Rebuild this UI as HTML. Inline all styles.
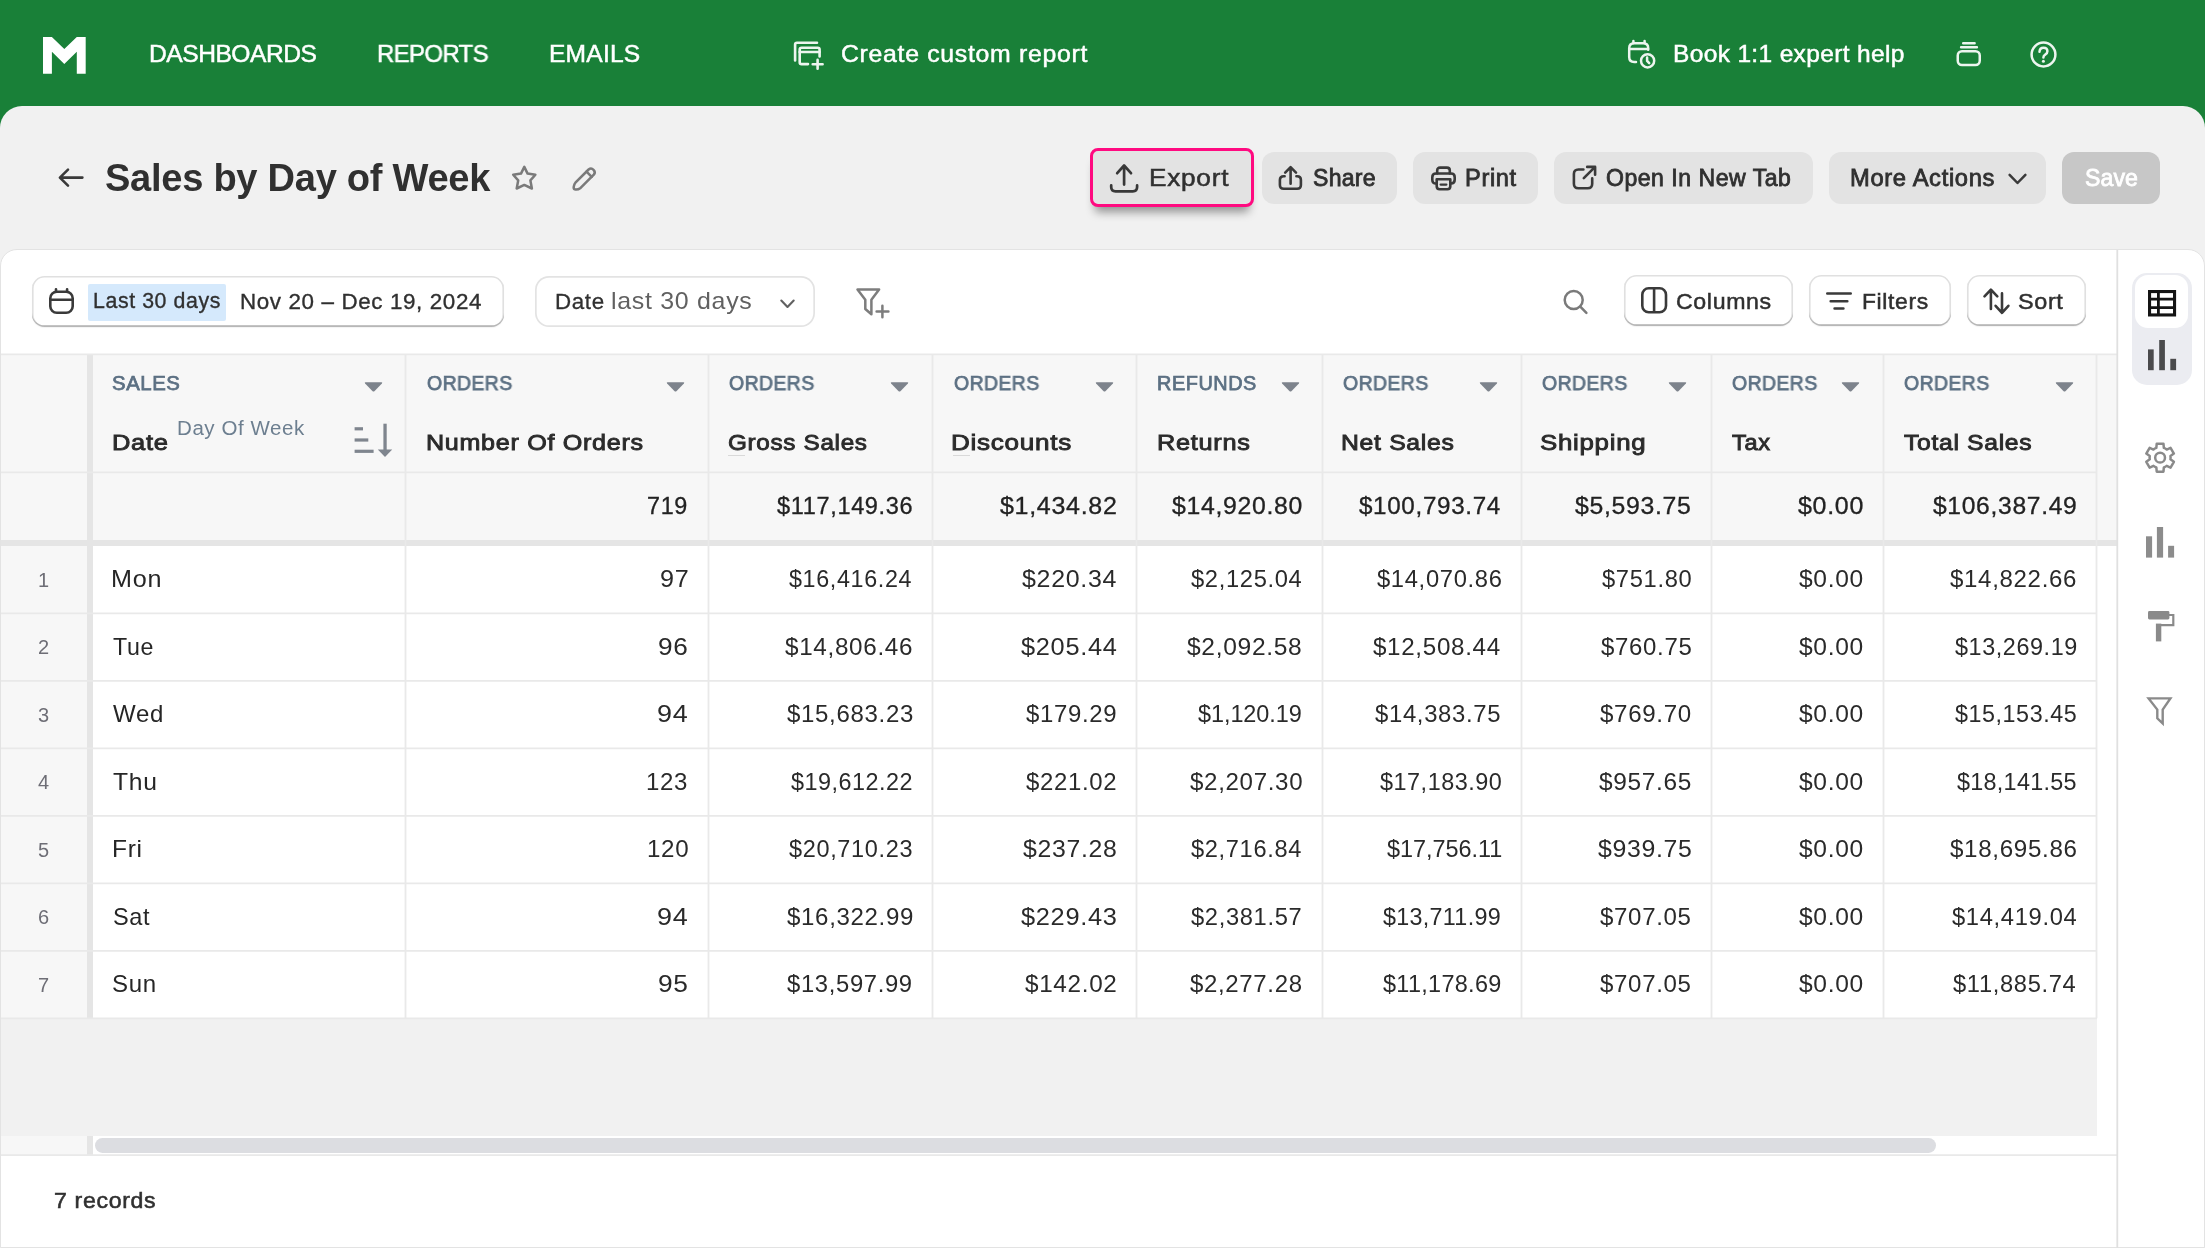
<!DOCTYPE html><html><head><meta charset="utf-8"><title>Sales by Day of Week</title><style>

*{box-sizing:border-box;margin:0;padding:0}
html,body{width:2205px;height:1248px;overflow:hidden}
body{background:#198038;font-family:"Liberation Sans",sans-serif;position:relative;color:#303030}
.abs{position:absolute}
.t{position:absolute;white-space:nowrap;line-height:1;transform-origin:left center;will-change:transform}
.panel{position:absolute;left:0;top:106px;width:2205px;height:1142px;background:#f1f1f1;border-radius:22px 22px 0 0}
.card{position:absolute;left:0;top:249px;width:2205px;height:999px;background:#fff;border:1.5px solid #e3e3e3;border-radius:17px 17px 0 0;overflow:hidden}
.btn{position:absolute;background:#e3e3e3;border-radius:12px}
.pill{position:absolute;background:#fff;border-radius:12.5px;box-shadow:inset 0 -1.7px 0 0 #b7b7b7,inset 0 0 0 1.6px #e0e0e0,0 1px 1px rgba(0,0,0,.05)}
svg{position:absolute;overflow:visible}

</style></head><body>
<div class="panel"></div>
<svg style="left:42.6px;top:36.5px" width="42.7" height="36.8" viewBox="0 0 42.7 36.8"><path d="M0 0 H8.9 L21.3 12.1 L33.8 0 H42.7 V36.8 H33.8 V14.8 L21.3 27 L8.9 14.8 V36.8 H0Z" fill="#fff"/></svg>
<svg style="left:793px;top:40.5px" width="31" height="29" viewBox="0 0 31 29" fill="none" stroke="#edf5ef" stroke-width="2.6" stroke-linecap="round" stroke-linejoin="round"><path d="M2.1 19.5 V3.6 Q2.1 1.7 4 1.7 H24"/><path d="M15 23.1 H8.6 Q6.7 23.1 6.7 21.2 V8.6 Q6.7 6.7 8.6 6.7 H24.7 Q26.6 6.7 26.6 8.6 V15.4"/><path d="M6.7 11 H26.6"/><path d="M24.6 18.9 V27.8 M19.7 23.3 H29.6"/></svg>
<svg style="left:1627px;top:40px" width="30" height="30" viewBox="0 0 30 30" fill="none" stroke="#edf5ef" stroke-width="2.5" stroke-linecap="round" stroke-linejoin="round"><path d="M9 22 H7.2 Q2.2 22 2.2 17 V8.2 Q2.2 3.2 7.2 3.2 H16.2 Q21.2 3.2 21.2 8.2 V9.8"/><path d="M2.4 8.9 H21"/><path d="M6.4 0.9 V3 M17.6 0.9 V3"/><circle cx="20.6" cy="20.8" r="6.6"/><path d="M20.1 17.6 V20.9 L22.2 23.2"/></svg>
<svg style="left:1956px;top:42px" width="26" height="25" viewBox="0 0 26 25" fill="none" stroke="#edf5ef" stroke-width="2.5" stroke-linecap="round" stroke-linejoin="round"><path d="M7.2 1.2 H18.6 M5.1 5.3 H20.9"/><rect x="1.75" y="9.25" width="22" height="13.8" rx="4.2"/></svg>
<svg style="left:2030.4px;top:40.7px" width="27" height="27" viewBox="0 0 27 27" fill="none" stroke="#edf5ef" stroke-width="2.5" stroke-linecap="round" stroke-linejoin="round"><circle cx="13.5" cy="13.5" r="11.9"/><path d="M9.5 10.8 Q9.7 6.7 13.5 6.7 Q17.4 6.7 17.4 10.2 Q17.4 12.4 15.2 13.6 Q13.4 14.6 13.4 16.6"/><circle cx="13.4" cy="20.3" r="1.5" fill="#edf5ef" stroke="none"/></svg>
<svg style="left:58px;top:167.8px" width="27" height="20" viewBox="0 0 27 20" fill="none" stroke="#3a3a3a" stroke-width="2.6" stroke-linecap="round" stroke-linejoin="round"><path d="M24.4 9.6 H2.2 M10 1.6 L1.9 9.6 L10 17.6"/></svg>
<svg style="left:511px;top:165px" width="27" height="26" viewBox="0 0 27 26" fill="none" stroke="#7a7a7a" stroke-width="2.5" stroke-linejoin="round" stroke-linecap="round"><path d="M13.3 1.9 L16.6 8.6 L24.4 9.7 L19.4 15.4 L20.9 23.5 L13.3 19.9 L5.7 23.5 L7.2 15.4 L2.2 9.7 L10 8.6Z"/></svg>
<svg style="left:571.5px;top:165.5px" width="26" height="26" viewBox="0 0 26 26" fill="none" stroke="#7a7a7a" stroke-width="2.5" stroke-linecap="round" stroke-linejoin="round"><path d="M16.6 3.5 A3.7 3.7 0 0 1 21.8 8.7 L8.6 21.9 Q5.5 24.2 2.8 23.4 Q1.3 22.8 1.8 20.4 Q2.3 18 3.4 16.7 Z"/><path d="M14.5 5.6 L19.7 10.8"/></svg>
<div class="abs" style="left:1090.2px;top:147.9px;width:163.9px;height:59.2px;border:3.8px solid #ff0a80;border-radius:8px;background:#e3e3e3;box-shadow:0 10px 10px -5px rgba(0,0,0,.40)"></div>
<div class="btn" style="left:1261.6px;top:152px;width:135.7px;height:51.7px"></div>
<div class="btn" style="left:1413px;top:152px;width:125.4px;height:51.7px"></div>
<div class="btn" style="left:1554.2px;top:152px;width:258.7px;height:51.7px"></div>
<div class="btn" style="left:1828.9px;top:152px;width:217.2px;height:51.7px"></div>
<div class="btn" style="left:2062.3px;top:152px;width:97.5px;height:51.7px;background:#c7c7c7"></div>
<svg style="left:1110px;top:163.5px" width="29" height="29" viewBox="0 0 29 29" fill="none" stroke="#383838" stroke-width="2.7" stroke-linecap="round" stroke-linejoin="round"><path d="M14.1 20.6 V1.6 M7.2 9.2 L14.1 1.5 L21 9.2"/><path d="M1.2 21.4 V23 Q1.2 27.3 5.5 27.3 H22.8 Q27.1 27.3 27.1 23 V21.4"/></svg>
<svg style="left:1278px;top:165.5px" width="25" height="25" viewBox="0 0 25 25" fill="none" stroke="#3a3a3a" stroke-width="2.6" stroke-linecap="round" stroke-linejoin="round"><path d="M12.6 17.8 V1.8 M7.2 6.6 L12.6 1.2 L18 6.6"/><path d="M6.6 10.2 H5.7 Q1.9 10.2 1.9 14 V19 Q1.9 22.8 5.7 22.8 H19.1 Q22.9 22.8 22.9 19 V14 Q22.9 10.2 19.1 10.2 H18.4"/></svg>
<svg style="left:1431px;top:165.5px" width="25" height="25" viewBox="0 0 25 25" fill="none" stroke="#3a3a3a" stroke-width="2.6" stroke-linecap="round" stroke-linejoin="round"><path d="M6.2 7.5 V4.5 Q6.2 1.6 9.1 1.6 H15.9 Q18.8 1.6 18.8 4.5 V7.5"/><path d="M5.7 17.5 H5 Q1.3 17.5 1.3 13.8 V11.2 Q1.3 7.5 5 7.5 H20 Q23.7 7.5 23.7 11.2 V13.8 Q23.7 17.5 20 17.5 H19.3"/><path d="M5.7 13.3 H19.3 V20.3 Q19.3 23.2 16.4 23.2 H8.6 Q5.7 23.2 5.7 20.3Z"/><path d="M9.6 18.6 H15.4" stroke-width="2.2"/></svg>
<svg style="left:1571.5px;top:165.3px" width="26" height="26" viewBox="0 0 26 26" fill="none" stroke="#3a3a3a" stroke-width="2.6" stroke-linecap="round" stroke-linejoin="round"><path d="M11.4 4.5 H6.4 Q1.9 4.5 1.9 9 V18.7 Q1.9 23.2 6.4 23.2 H15.7 Q20.2 23.2 20.2 18.7 V13.4"/><path d="M15.2 1.9 H23.1 V9.8 M22.8 2.2 L11.8 13.2"/></svg>
<svg style="left:2008px;top:173.3px" width="19" height="12" viewBox="0 0 19 12" fill="none" stroke="#3a3a3a" stroke-width="2.5" stroke-linecap="round" stroke-linejoin="round"><path d="M1.6 1.8 L9.5 10 L17.4 1.8"/></svg>
<div class="card"></div>
<div class="pill" style="left:31.9px;top:276.2px;width:472.5px;height:51.1px"></div>
<div class="abs" style="left:88.1px;top:283.7px;width:137.6px;height:36.9px;background:#d5e9fc;border-radius:2px"></div>
<div class="pill" style="left:535.4px;top:275.9px;width:279.6px;height:51.5px;border-radius:14px;box-shadow:inset 0 0 0 1.7px #e3e3e3"></div>
<div class="pill" style="left:1624.3px;top:274.9px;width:169.2px;height:50.8px"></div>
<div class="pill" style="left:1809.2px;top:274.9px;width:141.7px;height:50.8px"></div>
<div class="pill" style="left:1967.2px;top:274.9px;width:118.8px;height:50.8px"></div>
<svg style="left:48.8px;top:288px" width="25" height="26" viewBox="0 0 25 26" fill="none" stroke="#3a3a3a" stroke-width="2.6" stroke-linecap="round" stroke-linejoin="round"><rect x="1.3" y="3.8" width="22.4" height="20.9" rx="6.5"/><path d="M7 1.2 V3.6 M18.1 1.2 V3.6 M1.6 11.7 H23.4"/></svg>
<svg style="left:780px;top:299px" width="15" height="10" viewBox="0 0 15 10" fill="none" stroke="#616161" stroke-width="2.1" stroke-linecap="round" stroke-linejoin="round"><path d="M1.3 1.5 L7.5 7.9 L13.7 1.5"/></svg>
<svg style="left:856px;top:288px" width="34" height="31" viewBox="0 0 34 31" fill="none" stroke="#7d7d7d" stroke-width="2.5" stroke-linecap="round" stroke-linejoin="round"><path d="M1.5 1.6 H23.1 L15.4 11.8 V26.3 L9.3 21 V11.8Z"/><path d="M26.4 17.7 V29.3 M20.6 23.5 H32.4"/></svg>
<svg style="left:1562.5px;top:290.2px" width="25" height="24" viewBox="0 0 25 24" fill="none" stroke="#7a7a7a" stroke-width="2.5" stroke-linecap="round"><circle cx="10.7" cy="10.1" r="9"/><path d="M17.3 16.6 L23.4 22.8"/></svg>
<svg style="left:1640.5px;top:287.4px" width="27" height="27" viewBox="0 0 27 27" fill="none" stroke="#3a3a3a" stroke-width="2.6" stroke-linejoin="round"><rect x="1.3" y="1.3" width="23.7" height="23.9" rx="6.4"/><path d="M13.1 1.3 V25.2"/></svg>
<svg style="left:1826px;top:291.6px" width="26" height="19" viewBox="0 0 26 19" fill="none" stroke="#3a3a3a" stroke-width="2.6" stroke-linecap="round"><path d="M1.3 1.5 H24.7 M4.7 9.2 H21.3 M8.6 16.5 H17.4"/></svg>
<svg style="left:1983px;top:287.5px" width="27" height="27" viewBox="0 0 27 27" fill="none" stroke="#3a3a3a" stroke-width="2.6" stroke-linecap="round" stroke-linejoin="round"><path d="M7.9 21 V1.9 M1.5 8.4 L7.9 1.7 L14.3 8.4"/><path d="M19 5.4 V24.6 M12.6 17.8 L19 24.8 L25.4 17.8"/></svg>
<div class="abs" style="left:1px;top:354.5px;width:2116px;height:186px;background:#f7f7f7"></div>
<div class="abs" style="left:1px;top:546px;width:86px;height:472.2px;background:#f7f7f7"></div>
<div class="abs" style="left:1px;top:1018.2px;width:2096px;height:117.6px;background:#f1f1f1"></div>
<div class="abs" style="left:1px;top:1135.8px;width:86px;height:19.4px;background:#f7f7f7"></div>
<div class="abs" style="left:94.6px;top:1138px;width:1841.4px;height:14.7px;background:#dcdde1;border-radius:7.4px"></div>
<div class="abs" style="left:87px;top:355px;width:6px;height:663px;background:#e5e5e5"></div>
<div class="abs" style="left:87px;top:1136px;width:6px;height:19px;background:#e5e5e5"></div>
<div class="abs" style="left:1px;top:540px;width:2116px;height:6px;background:#e5e5e5"></div>
<svg style="left:0;top:0" width="2205" height="1248" viewBox="0 0 2205 1248" fill="none" stroke="#e9e9e9" stroke-width="1.8"><path d="M1 354.4 H2117 M1 472.3 H2097 M405.5 355 V1018.2 M708.5 355 V1018.2 M932.5 355 V1018.2 M1136.5 355 V1018.2 M1322.5 355 V1018.2 M1521.5 355 V1018.2 M1711.5 355 V1018.2 M1883.5 355 V1018.2 M2096.5 355 V1018.2 M1 613.3 H2097 M1 680.8 H2097 M1 748.3 H2097 M1 815.8 H2097 M1 883.3 H2097 M1 950.8 H2097 M1 1018.3 H2097 M1 1155.2 H2117"/><path d="M2117.3 250 V1248" stroke="#e0e0e0" stroke-width="1.8"/></svg>
<svg style="left:363.6px;top:381.8px" width="19" height="10" viewBox="0 0 19 10"><path d="M1.6 0.3 H17.4 Q18.9 0.4 17.9 1.5 L10.4 9.2 Q9.5 10 8.6 9.2 L1.1 1.5 Q0.1 0.4 1.6 0.3Z" fill="#7d838c"/></svg>
<svg style="left:665.8px;top:381.8px" width="19" height="10" viewBox="0 0 19 10"><path d="M1.6 0.3 H17.4 Q18.9 0.4 17.9 1.5 L10.4 9.2 Q9.5 10 8.6 9.2 L1.1 1.5 Q0.1 0.4 1.6 0.3Z" fill="#7d838c"/></svg>
<svg style="left:890.3px;top:381.8px" width="19" height="10" viewBox="0 0 19 10"><path d="M1.6 0.3 H17.4 Q18.9 0.4 17.9 1.5 L10.4 9.2 Q9.5 10 8.6 9.2 L1.1 1.5 Q0.1 0.4 1.6 0.3Z" fill="#7d838c"/></svg>
<svg style="left:1094.7px;top:381.8px" width="19" height="10" viewBox="0 0 19 10"><path d="M1.6 0.3 H17.4 Q18.9 0.4 17.9 1.5 L10.4 9.2 Q9.5 10 8.6 9.2 L1.1 1.5 Q0.1 0.4 1.6 0.3Z" fill="#7d838c"/></svg>
<svg style="left:1280.6px;top:381.8px" width="19" height="10" viewBox="0 0 19 10"><path d="M1.6 0.3 H17.4 Q18.9 0.4 17.9 1.5 L10.4 9.2 Q9.5 10 8.6 9.2 L1.1 1.5 Q0.1 0.4 1.6 0.3Z" fill="#7d838c"/></svg>
<svg style="left:1479.3px;top:381.8px" width="19" height="10" viewBox="0 0 19 10"><path d="M1.6 0.3 H17.4 Q18.9 0.4 17.9 1.5 L10.4 9.2 Q9.5 10 8.6 9.2 L1.1 1.5 Q0.1 0.4 1.6 0.3Z" fill="#7d838c"/></svg>
<svg style="left:1668.4px;top:381.8px" width="19" height="10" viewBox="0 0 19 10"><path d="M1.6 0.3 H17.4 Q18.9 0.4 17.9 1.5 L10.4 9.2 Q9.5 10 8.6 9.2 L1.1 1.5 Q0.1 0.4 1.6 0.3Z" fill="#7d838c"/></svg>
<svg style="left:1841.0px;top:381.8px" width="19" height="10" viewBox="0 0 19 10"><path d="M1.6 0.3 H17.4 Q18.9 0.4 17.9 1.5 L10.4 9.2 Q9.5 10 8.6 9.2 L1.1 1.5 Q0.1 0.4 1.6 0.3Z" fill="#7d838c"/></svg>
<svg style="left:2055.0px;top:381.8px" width="19" height="10" viewBox="0 0 19 10"><path d="M1.6 0.3 H17.4 Q18.9 0.4 17.9 1.5 L10.4 9.2 Q9.5 10 8.6 9.2 L1.1 1.5 Q0.1 0.4 1.6 0.3Z" fill="#7d838c"/></svg>
<svg style="left:353.5px;top:423px" width="39" height="35" viewBox="0 0 39 35" fill="#7f858e" stroke="none"><rect x="0.6" y="4.2" width="8.4" height="3.2"/><rect x="0.6" y="15.4" width="13.7" height="3.2"/><rect x="0.6" y="26.7" width="19" height="3.2"/><rect x="29.4" y="0.7" width="3.3" height="27"/><path d="M23.8 26.4 H38.2 L31 33.9Z"/></svg>
<div class="abs" style="left:728px;top:455px;width:17px;height:1px;background:#d9d9d9"></div>
<div class="abs" style="left:953px;top:455px;width:17px;height:1px;background:#d9d9d9"></div>
<div class="abs" style="left:2131.8px;top:272.8px;width:60.4px;height:112px;background:#ebecf1;border-radius:15px"></div>
<div class="abs" style="left:2134.9px;top:275.4px;width:53.6px;height:53.1px;background:#fff;border-radius:13px"></div>
<svg style="left:2147.7px;top:290.3px" width="28.1" height="26.5" viewBox="0 0 28.1 26.5" fill="none" stroke="#141414"><rect x="1.55" y="1.55" width="25" height="23.4" stroke-width="3.1"/><path d="M1.5 9.2 H26.6 M1.5 17.6 H26.6 M10.4 1.5 V25" stroke-width="2.8"/></svg>
<svg style="left:2147.7px;top:340.2px" width="29" height="31" viewBox="0 0 29 31" fill="#4a4a4c"><rect x="0" y="9.4" width="5.7" height="20.8"/><rect x="11.2" y="0" width="5.7" height="30.2"/><rect x="22.3" y="18.8" width="5.8" height="11.4"/></svg>
<svg style="left:2146px;top:526.7px" width="29" height="31" viewBox="0 0 29 31" fill="#8c8c8c"><rect x="0" y="9.3" width="6.1" height="21.3"/><rect x="10.9" y="0" width="6.2" height="30.6"/><rect x="22.1" y="18.8" width="6" height="11.8"/></svg>
<svg style="left:2144.9px;top:441.8px" width="30.2" height="31.4" viewBox="0 0 30.2 31.4" fill="none" stroke="#8a8a8a" stroke-width="2.5" stroke-linejoin="round"><path d="M11.34 5.90 L11.74 1.70 L18.46 1.70 L18.86 5.90 A10.5 10.5 0 0 1 21.71 7.54 L25.55 5.79 L28.91 11.61 L25.47 14.06 A10.5 10.5 0 0 1 25.47 17.34 L28.91 19.79 L25.55 25.61 L21.71 23.86 A10.5 10.5 0 0 1 18.86 25.50 L18.46 29.70 L11.74 29.70 L11.34 25.50 A10.5 10.5 0 0 1 8.49 23.86 L4.65 25.61 L1.29 19.79 L4.73 17.34 A10.5 10.5 0 0 1 4.73 14.06 L1.29 11.61 L4.65 5.79 L8.49 7.54 A10.5 10.5 0 0 1 11.34 5.90 Z"/><circle cx="15.1" cy="15.7" r="4.9"/></svg>
<svg style="left:2147.9px;top:610.9px" width="27" height="31" viewBox="0 0 27 31" fill="#8a8a8a"><rect x="0" y="0" width="21.4" height="8.5" rx="1.4"/><path d="M21 2.9 H26.4 V15.2 H13 V13 H24.2 V5.1 H21Z"/><rect x="7.9" y="12.6" width="5.4" height="17.8"/></svg>
<svg style="left:2147.3px;top:696.5px" width="26" height="29" viewBox="0 0 26 29" fill="none" stroke="#8a8a8a" stroke-width="2.4" stroke-linejoin="miter"><path d="M1.6 1.4 H23.4 L15.7 12.6 V26.4 L10.3 21.3 V12.6Z"/></svg>
<div class="t" style="left:148.95px;top:42.00px;font-size:24.60px;color:#ffffff;letter-spacing:-0.478px;transform:scaleX(0.9982);-webkit-text-stroke:0.50px #ffffff;">DASHBOARDS</div>
<div class="t" style="left:376.90px;top:42.00px;font-size:24.60px;color:#ffffff;letter-spacing:-0.689px;transform:scaleX(0.9762);-webkit-text-stroke:0.50px #ffffff;">REPORTS</div>
<div class="t" style="left:548.60px;top:42.00px;font-size:24.60px;color:#ffffff;letter-spacing:0.200px;-webkit-text-stroke:0.50px #ffffff;">EMAILS</div>
<div class="t" style="left:841.40px;top:42.01px;font-size:24.50px;color:#ffffff;letter-spacing:0.686px;transform:scaleX(1.0131);-webkit-text-stroke:0.50px #ffffff;">Create custom report</div>
<div class="t" style="left:1673.40px;top:42.01px;font-size:24.50px;color:#ffffff;letter-spacing:0.347px;transform:scaleX(0.9983);-webkit-text-stroke:0.50px #ffffff;">Book 1:1 expert help</div>
<div class="t" style="left:105.45px;top:159.00px;font-size:38.00px;color:#303030;font-weight:700;letter-spacing:-0.279px;transform:scaleX(1.0018);">Sales by Day of Week</div>
<div class="t" style="left:1148.60px;top:166.01px;font-size:24.70px;color:#303030;letter-spacing:0.692px;transform:scaleX(1.0618);-webkit-text-stroke:0.55px #303030;">Export</div>
<div class="t" style="left:1313.15px;top:167.01px;font-size:23.00px;color:#303030;letter-spacing:0.275px;transform:scaleX(1.0016);-webkit-text-stroke:0.80px #303030;">Share</div>
<div class="t" style="left:1465.05px;top:167.01px;font-size:23.00px;color:#303030;letter-spacing:0.644px;transform:scaleX(1.0250);-webkit-text-stroke:0.80px #303030;">Print</div>
<div class="t" style="left:1606.25px;top:167.01px;font-size:23.00px;color:#303030;letter-spacing:0.521px;transform:scaleX(1.0016);-webkit-text-stroke:0.80px #303030;">Open In New Tab</div>
<div class="t" style="left:1849.95px;top:167.01px;font-size:23.00px;color:#303030;letter-spacing:0.644px;transform:scaleX(1.0311);-webkit-text-stroke:0.80px #303030;">More Actions</div>
<div class="t" style="left:2084.70px;top:167.01px;font-size:23.00px;color:#ffffff;letter-spacing:0.067px;transform:scaleX(1.0039);-webkit-text-stroke:0.80px #ffffff;">Save</div>
<div class="t" style="left:92.95px;top:291.00px;font-size:21.30px;color:#303030;letter-spacing:0.596px;transform:scaleX(0.9987);-webkit-text-stroke:0.35px #303030;">Last 30 days</div>
<div class="t" style="left:240.20px;top:291.01px;font-size:22.30px;color:#303030;letter-spacing:0.624px;transform:scaleX(1.0038);-webkit-text-stroke:0.35px #303030;">Nov 20 – Dec 19, 2024</div>
<div class="t" style="left:554.85px;top:291.01px;font-size:22.30px;color:#303030;letter-spacing:0.624px;transform:scaleX(1.0028);-webkit-text-stroke:0.30px #303030;">Date</div>
<div class="t" style="left:611.25px;top:289.01px;font-size:24.00px;color:#616161;letter-spacing:0.672px;transform:scaleX(1.0394);">last 30 days</div>
<div class="t" style="left:1675.60px;top:291.01px;font-size:22.60px;color:#303030;letter-spacing:0.633px;transform:scaleX(1.0240);-webkit-text-stroke:0.50px #303030;">Columns</div>
<div class="t" style="left:1862.00px;top:291.01px;font-size:22.60px;color:#303030;letter-spacing:0.633px;transform:scaleX(1.0126);-webkit-text-stroke:0.50px #303030;">Filters</div>
<div class="t" style="left:2018.45px;top:291.01px;font-size:22.60px;color:#303030;letter-spacing:0.633px;transform:scaleX(1.0353);-webkit-text-stroke:0.50px #303030;">Sort</div>
<div class="t" style="left:112.00px;top:374.00px;font-size:19.60px;color:#5c7083;letter-spacing:0.549px;transform:scaleX(1.0376);-webkit-text-stroke:0.75px #5c7083;">SALES</div>
<div class="t" style="left:426.70px;top:374.00px;font-size:19.60px;color:#5c7083;letter-spacing:0.440px;transform:scaleX(0.9907);-webkit-text-stroke:0.75px #5c7083;">ORDERS</div>
<div class="t" style="left:729.20px;top:374.00px;font-size:19.60px;color:#5c7083;letter-spacing:0.440px;transform:scaleX(0.9907);-webkit-text-stroke:0.75px #5c7083;">ORDERS</div>
<div class="t" style="left:953.70px;top:374.00px;font-size:19.60px;color:#5c7083;letter-spacing:0.440px;transform:scaleX(0.9907);-webkit-text-stroke:0.75px #5c7083;">ORDERS</div>
<div class="t" style="left:1156.75px;top:374.00px;font-size:19.60px;color:#5c7083;letter-spacing:0.549px;transform:scaleX(1.0136);-webkit-text-stroke:0.75px #5c7083;">REFUNDS</div>
<div class="t" style="left:1342.70px;top:374.00px;font-size:19.60px;color:#5c7083;letter-spacing:0.440px;transform:scaleX(0.9907);-webkit-text-stroke:0.75px #5c7083;">ORDERS</div>
<div class="t" style="left:1541.70px;top:374.00px;font-size:19.60px;color:#5c7083;letter-spacing:0.440px;transform:scaleX(0.9907);-webkit-text-stroke:0.75px #5c7083;">ORDERS</div>
<div class="t" style="left:1732.20px;top:374.00px;font-size:19.60px;color:#5c7083;letter-spacing:0.440px;transform:scaleX(0.9907);-webkit-text-stroke:0.75px #5c7083;">ORDERS</div>
<div class="t" style="left:1904.20px;top:374.00px;font-size:19.60px;color:#5c7083;letter-spacing:0.440px;transform:scaleX(0.9907);-webkit-text-stroke:0.75px #5c7083;">ORDERS</div>
<div class="t" style="left:112.10px;top:432.01px;font-size:22.60px;color:#2b2b2b;letter-spacing:0.633px;transform:scaleX(1.1274);-webkit-text-stroke:0.90px #2b2b2b;">Date</div>
<div class="t" style="left:177.25px;top:419.01px;font-size:19.50px;color:#6d7f90;letter-spacing:0.546px;transform:scaleX(1.0514);">Day Of Week</div>
<div class="t" style="left:425.60px;top:432.01px;font-size:22.60px;color:#2b2b2b;letter-spacing:0.633px;transform:scaleX(1.1112);-webkit-text-stroke:0.90px #2b2b2b;">Number Of Orders</div>
<div class="t" style="left:727.80px;top:432.01px;font-size:22.60px;color:#2b2b2b;letter-spacing:0.633px;transform:scaleX(1.0738);-webkit-text-stroke:0.90px #2b2b2b;">Gross Sales</div>
<div class="t" style="left:951.30px;top:432.01px;font-size:22.60px;color:#2b2b2b;letter-spacing:0.633px;transform:scaleX(1.1529);-webkit-text-stroke:0.90px #2b2b2b;">Discounts</div>
<div class="t" style="left:1156.50px;top:432.01px;font-size:22.60px;color:#2b2b2b;letter-spacing:0.633px;transform:scaleX(1.1199);-webkit-text-stroke:0.90px #2b2b2b;">Returns</div>
<div class="t" style="left:1341.30px;top:432.01px;font-size:22.60px;color:#2b2b2b;letter-spacing:0.633px;transform:scaleX(1.0954);-webkit-text-stroke:0.90px #2b2b2b;">Net Sales</div>
<div class="t" style="left:1540.20px;top:432.01px;font-size:22.60px;color:#2b2b2b;letter-spacing:0.633px;transform:scaleX(1.1434);-webkit-text-stroke:0.90px #2b2b2b;">Shipping</div>
<div class="t" style="left:1732.30px;top:432.01px;font-size:22.60px;color:#2b2b2b;letter-spacing:0.633px;transform:scaleX(1.0426);-webkit-text-stroke:0.90px #2b2b2b;">Tax</div>
<div class="t" style="left:1904.10px;top:432.01px;font-size:22.60px;color:#2b2b2b;letter-spacing:0.633px;transform:scaleX(1.0917);-webkit-text-stroke:0.90px #2b2b2b;">Total Sales</div>
<div class="t" style="left:647.39px;top:495.01px;font-size:23.30px;color:#222222;letter-spacing:0.652px;transform:scaleX(1.0033);-webkit-text-stroke:0.30px #222222;">719</div>
<div class="t" style="left:776.60px;top:495.01px;font-size:23.30px;color:#222222;letter-spacing:0.652px;transform:scaleX(1.0094);-webkit-text-stroke:0.30px #222222;">$117,149.36</div>
<div class="t" style="left:999.95px;top:495.01px;font-size:23.30px;color:#222222;letter-spacing:0.652px;transform:scaleX(1.0736);-webkit-text-stroke:0.30px #222222;">$1,434.82</div>
<div class="t" style="left:1171.96px;top:495.01px;font-size:23.30px;color:#222222;letter-spacing:0.652px;transform:scaleX(1.0645);-webkit-text-stroke:0.30px #222222;">$14,920.80</div>
<div class="t" style="left:1358.89px;top:495.01px;font-size:23.30px;color:#222222;letter-spacing:0.652px;transform:scaleX(1.0378);-webkit-text-stroke:0.30px #222222;">$100,793.74</div>
<div class="t" style="left:1575.42px;top:495.01px;font-size:23.30px;color:#222222;letter-spacing:0.652px;transform:scaleX(1.0644);-webkit-text-stroke:0.30px #222222;">$5,593.75</div>
<div class="t" style="left:1797.53px;top:495.01px;font-size:23.30px;color:#222222;letter-spacing:0.652px;transform:scaleX(1.0730);-webkit-text-stroke:0.30px #222222;">$0.00</div>
<div class="t" style="left:1932.74px;top:495.01px;font-size:23.30px;color:#222222;letter-spacing:0.652px;transform:scaleX(1.0563);-webkit-text-stroke:0.30px #222222;">$106,387.49</div>
<div class="t" style="left:38.00px;top:569.91px;font-size:20.00px;color:#6e6e76;">1</div>
<div class="t" style="left:111.10px;top:568.11px;font-size:23.20px;color:#262626;letter-spacing:0.650px;transform:scaleX(1.0855);">Mon</div>
<div class="t" style="left:659.50px;top:568.10px;font-size:23.30px;color:#2a2a2a;letter-spacing:0.652px;transform:scaleX(1.0791);">97</div>
<div class="t" style="left:789.15px;top:568.10px;font-size:23.30px;color:#2a2a2a;letter-spacing:0.652px;">$16,416.24</div>
<div class="t" style="left:1021.65px;top:568.10px;font-size:23.30px;color:#2a2a2a;letter-spacing:0.652px;transform:scaleX(1.0715);">$220.34</div>
<div class="t" style="left:1190.87px;top:568.10px;font-size:23.30px;color:#2a2a2a;letter-spacing:0.652px;transform:scaleX(1.0174);">$2,125.04</div>
<div class="t" style="left:1376.56px;top:568.10px;font-size:23.30px;color:#2a2a2a;letter-spacing:0.652px;transform:scaleX(1.0194);">$14,070.86</div>
<div class="t" style="left:1601.77px;top:568.10px;font-size:23.30px;color:#2a2a2a;letter-spacing:0.652px;transform:scaleX(1.0180);">$751.80</div>
<div class="t" style="left:1798.66px;top:568.10px;font-size:23.30px;color:#2a2a2a;letter-spacing:0.652px;transform:scaleX(1.0546);">$0.00</div>
<div class="t" style="left:1950.25px;top:568.10px;font-size:23.30px;color:#2a2a2a;letter-spacing:0.652px;transform:scaleX(1.0324);">$14,822.66</div>
<div class="t" style="left:38.00px;top:637.41px;font-size:20.00px;color:#6e6e76;">2</div>
<div class="t" style="left:113.35px;top:635.61px;font-size:23.20px;color:#262626;letter-spacing:0.650px;transform:scaleX(0.9925);">Tue</div>
<div class="t" style="left:658.28px;top:635.60px;font-size:23.30px;color:#2a2a2a;letter-spacing:0.652px;transform:scaleX(1.1237);">96</div>
<div class="t" style="left:785.12px;top:635.60px;font-size:23.30px;color:#2a2a2a;letter-spacing:0.652px;transform:scaleX(1.0411);">$14,806.46</div>
<div class="t" style="left:1020.86px;top:635.60px;font-size:23.30px;color:#2a2a2a;letter-spacing:0.652px;transform:scaleX(1.0882);">$205.44</div>
<div class="t" style="left:1186.87px;top:635.60px;font-size:23.30px;color:#2a2a2a;letter-spacing:0.652px;transform:scaleX(1.0543);">$2,092.58</div>
<div class="t" style="left:1373.27px;top:635.60px;font-size:23.30px;color:#2a2a2a;letter-spacing:0.652px;transform:scaleX(1.0378);">$12,508.44</div>
<div class="t" style="left:1600.77px;top:635.60px;font-size:23.30px;color:#2a2a2a;letter-spacing:0.652px;transform:scaleX(1.0295);">$760.75</div>
<div class="t" style="left:1798.66px;top:635.60px;font-size:23.30px;color:#2a2a2a;letter-spacing:0.652px;transform:scaleX(1.0546);">$0.00</div>
<div class="t" style="left:1954.57px;top:635.60px;font-size:23.30px;color:#2a2a2a;letter-spacing:0.593px;transform:scaleX(1.0028);">$13,269.19</div>
<div class="t" style="left:38.00px;top:704.91px;font-size:20.00px;color:#6e6e76;">3</div>
<div class="t" style="left:113.10px;top:703.11px;font-size:23.20px;color:#262626;letter-spacing:0.650px;transform:scaleX(1.0360);">Wed</div>
<div class="t" style="left:656.57px;top:703.10px;font-size:23.30px;color:#2a2a2a;letter-spacing:0.652px;transform:scaleX(1.1553);">94</div>
<div class="t" style="left:786.78px;top:703.10px;font-size:23.30px;color:#2a2a2a;letter-spacing:0.652px;transform:scaleX(1.0315);">$15,683.23</div>
<div class="t" style="left:1026.42px;top:703.10px;font-size:23.30px;color:#2a2a2a;letter-spacing:0.652px;transform:scaleX(1.0275);">$179.29</div>
<div class="t" style="left:1198.08px;top:703.10px;font-size:23.30px;color:#2a2a2a;letter-spacing:-0.055px;transform:scaleX(1.0055);">$1,120.19</div>
<div class="t" style="left:1375.32px;top:703.10px;font-size:23.30px;color:#2a2a2a;letter-spacing:0.652px;transform:scaleX(1.0248);">$14,383.75</div>
<div class="t" style="left:1600.44px;top:703.10px;font-size:23.30px;color:#2a2a2a;letter-spacing:0.652px;transform:scaleX(1.0351);">$769.70</div>
<div class="t" style="left:1798.66px;top:703.10px;font-size:23.30px;color:#2a2a2a;letter-spacing:0.652px;transform:scaleX(1.0546);">$0.00</div>
<div class="t" style="left:1954.74px;top:703.10px;font-size:23.30px;color:#2a2a2a;letter-spacing:0.564px;">$15,153.45</div>
<div class="t" style="left:38.00px;top:772.41px;font-size:20.00px;color:#6e6e76;">4</div>
<div class="t" style="left:113.05px;top:770.61px;font-size:23.20px;color:#262626;letter-spacing:0.650px;transform:scaleX(1.0636);">Thu</div>
<div class="t" style="left:646.32px;top:770.60px;font-size:23.30px;color:#2a2a2a;letter-spacing:0.652px;transform:scaleX(1.0310);">123</div>
<div class="t" style="left:790.85px;top:770.60px;font-size:23.30px;color:#2a2a2a;letter-spacing:0.500px;transform:scaleX(1.0042);">$19,612.22</div>
<div class="t" style="left:1026.42px;top:770.60px;font-size:23.30px;color:#2a2a2a;letter-spacing:0.652px;transform:scaleX(1.0275);">$221.02</div>
<div class="t" style="left:1189.53px;top:770.60px;font-size:23.30px;color:#2a2a2a;letter-spacing:0.652px;transform:scaleX(1.0342);">$2,207.30</div>
<div class="t" style="left:1379.81px;top:770.60px;font-size:23.30px;color:#2a2a2a;letter-spacing:0.513px;transform:scaleX(1.0052);">$17,183.90</div>
<div class="t" style="left:1599.08px;top:770.60px;font-size:23.30px;color:#2a2a2a;letter-spacing:0.652px;transform:scaleX(1.0484);">$957.65</div>
<div class="t" style="left:1798.66px;top:770.60px;font-size:23.30px;color:#2a2a2a;letter-spacing:0.652px;transform:scaleX(1.0546);">$0.00</div>
<div class="t" style="left:1957.48px;top:770.60px;font-size:23.30px;color:#2a2a2a;letter-spacing:0.274px;transform:scaleX(1.0040);">$18,141.55</div>
<div class="t" style="left:38.00px;top:839.91px;font-size:20.00px;color:#6e6e76;">5</div>
<div class="t" style="left:111.55px;top:838.11px;font-size:23.20px;color:#262626;letter-spacing:0.650px;transform:scaleX(1.0593);">Fri</div>
<div class="t" style="left:646.53px;top:838.10px;font-size:23.30px;color:#2a2a2a;letter-spacing:0.652px;transform:scaleX(1.0375);">120</div>
<div class="t" style="left:788.67px;top:838.10px;font-size:23.30px;color:#2a2a2a;letter-spacing:0.652px;transform:scaleX(1.0081);">$20,710.23</div>
<div class="t" style="left:1022.91px;top:838.10px;font-size:23.30px;color:#2a2a2a;letter-spacing:0.652px;transform:scaleX(1.0659);">$237.28</div>
<div class="t" style="left:1190.77px;top:838.10px;font-size:23.30px;color:#2a2a2a;letter-spacing:0.652px;transform:scaleX(1.0137);">$2,716.84</div>
<div class="t" style="left:1386.63px;top:838.10px;font-size:23.30px;color:#2a2a2a;letter-spacing:-0.038px;transform:scaleX(1.0058);">$17,756.11</div>
<div class="t" style="left:1597.55px;top:838.10px;font-size:23.30px;color:#2a2a2a;letter-spacing:0.652px;transform:scaleX(1.0652);">$939.75</div>
<div class="t" style="left:1798.66px;top:838.10px;font-size:23.30px;color:#2a2a2a;letter-spacing:0.652px;transform:scaleX(1.0546);">$0.00</div>
<div class="t" style="left:1950.40px;top:838.10px;font-size:23.30px;color:#2a2a2a;letter-spacing:0.652px;transform:scaleX(1.0374);">$18,695.86</div>
<div class="t" style="left:38.00px;top:907.41px;font-size:20.00px;color:#6e6e76;">6</div>
<div class="t" style="left:112.55px;top:905.61px;font-size:23.20px;color:#262626;letter-spacing:0.650px;transform:scaleX(1.0156);">Sat</div>
<div class="t" style="left:656.57px;top:905.60px;font-size:23.30px;color:#2a2a2a;letter-spacing:0.652px;transform:scaleX(1.1553);">94</div>
<div class="t" style="left:786.64px;top:905.60px;font-size:23.30px;color:#2a2a2a;letter-spacing:0.652px;transform:scaleX(1.0320);">$16,322.99</div>
<div class="t" style="left:1021.00px;top:905.60px;font-size:23.30px;color:#2a2a2a;letter-spacing:0.652px;transform:scaleX(1.0884);">$229.43</div>
<div class="t" style="left:1191.46px;top:905.60px;font-size:23.30px;color:#2a2a2a;letter-spacing:0.652px;transform:scaleX(1.0171);">$2,381.57</div>
<div class="t" style="left:1383.22px;top:905.60px;font-size:23.30px;color:#2a2a2a;letter-spacing:0.306px;transform:scaleX(0.9979);">$13,711.99</div>
<div class="t" style="left:1600.28px;top:905.60px;font-size:23.30px;color:#2a2a2a;letter-spacing:0.652px;transform:scaleX(1.0321);">$707.05</div>
<div class="t" style="left:1798.66px;top:905.60px;font-size:23.30px;color:#2a2a2a;letter-spacing:0.652px;transform:scaleX(1.0546);">$0.00</div>
<div class="t" style="left:1951.83px;top:905.60px;font-size:23.30px;color:#2a2a2a;letter-spacing:0.652px;transform:scaleX(1.0184);">$14,419.04</div>
<div class="t" style="left:38.00px;top:974.91px;font-size:20.00px;color:#6e6e76;">7</div>
<div class="t" style="left:112.05px;top:973.11px;font-size:23.20px;color:#262626;letter-spacing:0.650px;transform:scaleX(1.0372);">Sun</div>
<div class="t" style="left:657.96px;top:973.10px;font-size:23.30px;color:#2a2a2a;letter-spacing:0.652px;transform:scaleX(1.1293);">95</div>
<div class="t" style="left:786.98px;top:973.10px;font-size:23.30px;color:#2a2a2a;letter-spacing:0.652px;transform:scaleX(1.0216);">$13,597.99</div>
<div class="t" style="left:1025.25px;top:973.10px;font-size:23.30px;color:#2a2a2a;letter-spacing:0.652px;transform:scaleX(1.0424);">$142.02</div>
<div class="t" style="left:1190.24px;top:973.10px;font-size:23.30px;color:#2a2a2a;letter-spacing:0.652px;transform:scaleX(1.0292);">$2,277.28</div>
<div class="t" style="left:1383.40px;top:973.10px;font-size:23.30px;color:#2a2a2a;letter-spacing:0.301px;transform:scaleX(1.0061);">$11,178.69</div>
<div class="t" style="left:1600.28px;top:973.10px;font-size:23.30px;color:#2a2a2a;letter-spacing:0.652px;transform:scaleX(1.0321);">$707.05</div>
<div class="t" style="left:1798.66px;top:973.10px;font-size:23.30px;color:#2a2a2a;letter-spacing:0.652px;transform:scaleX(1.0546);">$0.00</div>
<div class="t" style="left:1953.46px;top:973.10px;font-size:23.30px;color:#2a2a2a;letter-spacing:0.652px;transform:scaleX(1.0164);">$11,885.74</div>
<div class="t" style="left:53.85px;top:1190.00px;font-size:22.20px;color:#303030;letter-spacing:0.622px;transform:scaleX(1.0420);-webkit-text-stroke:0.55px #303030;">7 records</div>
</body></html>
